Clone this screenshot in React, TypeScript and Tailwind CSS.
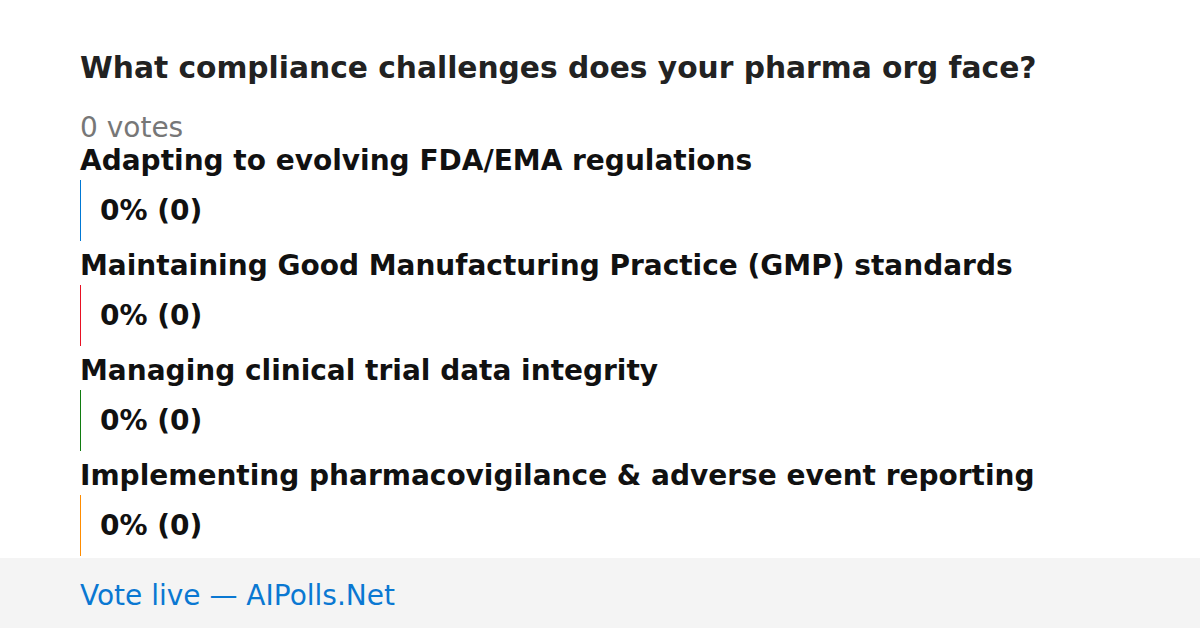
import React from "react";

const options = [
  { label: "Adapting to evolving FDA/EMA regulations", color: "border-[#0078d4]" },
  { label: "Maintaining Good Manufacturing Practice (GMP) standards", color: "border-[#e81123]" },
  { label: "Managing clinical trial data integrity", color: "border-[#107c10]" },
  { label: "Implementing pharmacovigilance & adverse event reporting", color: "border-[#ff8c00]" },
];

export default function App() {
  return (
    <div className="w-[1200px] h-[628px] bg-white flex flex-col overflow-hidden" style={{ fontFamily: '"DejaVu Sans", sans-serif' }}>
      <div className="flex-1 overflow-hidden px-[80px] pt-[50px]">
        <h1 className="text-[29.7px] leading-[35px] font-bold text-[#222222]">What compliance challenges does your pharma org face?</h1>
        <div className="mt-[27px] text-[28px] leading-[32px] text-[#777777]">0 votes</div>
        <div className="flex flex-col">
          {options.map((o, i) => (
            <div key={i} className="flex flex-col">
              <div className="text-[28px] leading-[33px] font-bold text-[#111111]">{o.label}</div>
              <div className={`mt-[3px] mb-[8px] h-[61px] border-l ${o.color} pl-[19px] flex items-center`}>
                <span className="text-[28px] leading-[33px] font-bold text-[#111111]">0% (0)</span>
              </div>
            </div>
          ))}
        </div>
      </div>
      <div className="h-[70px] shrink-0 bg-[#f4f4f4] px-[80px] pt-[4px] flex items-center">
        <span className="text-[28px] leading-[33px] text-[#0a78d2]">Vote live — AIPolls.Net</span>
      </div>
    </div>
  );
}
